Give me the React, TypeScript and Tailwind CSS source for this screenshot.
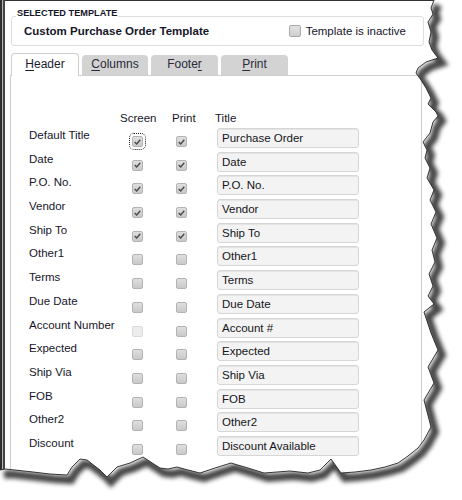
import clsx from "clsx";

type Row = {
  label: string;
  screen: boolean;
  print: boolean;
  title: string;
  focus?: boolean;
  disabled?: boolean;
};

const rows: Row[] = [
  { label: "Default Title", screen: true, print: true, title: "Purchase Order", focus: true },
  { label: "Date", screen: true, print: true, title: "Date" },
  { label: "P.O. No.", screen: true, print: true, title: "P.O. No." },
  { label: "Vendor", screen: true, print: true, title: "Vendor" },
  { label: "Ship To", screen: true, print: true, title: "Ship To" },
  { label: "Other1", screen: false, print: false, title: "Other1" },
  { label: "Terms", screen: false, print: false, title: "Terms" },
  { label: "Due Date", screen: false, print: false, title: "Due Date" },
  { label: "Account Number", screen: false, print: false, title: "Account #", disabled: true },
  { label: "Expected", screen: false, print: false, title: "Expected" },
  { label: "Ship Via", screen: false, print: false, title: "Ship Via" },
  { label: "FOB", screen: false, print: false, title: "FOB" },
  { label: "Other2", screen: false, print: false, title: "Other2" },
  { label: "Discount", screen: false, print: false, title: "Discount Available" },
];

function Check({ checked, disabled, focus }: { checked?: boolean; disabled?: boolean; focus?: boolean }) {
  return (
    <span
      className={clsx(
        "flex h-[11px] w-[11px] items-center justify-center rounded-[2px] border",
        disabled
          ? "border-[#dadada] bg-[#ececec]"
          : "border-[#b3b3b3] bg-linear-to-b from-[#dfdfdf] to-[#c9c9c9]",
        focus && "outline-1 outline-offset-2 outline-dotted outline-[#222]"
      )}
    >
      {checked ? (
        <svg width="7" height="6" viewBox="0 0 7 6">
          <path d="M0.7 3.1 L2.7 5 L6.3 0.8" fill="none" stroke="#4a4a4a" strokeWidth="1.4" />
        </svg>
      ) : null}
    </span>
  );
}

// torn paper edge, right side then bottom
const edge: [number, number][] = [
  [434, 0], [431, 8], [433, 14], [428, 22], [431, 32], [429, 42], [432, 50], [438, 58],
  [426, 62], [418, 68], [416, 73], [421, 80], [426, 88], [431, 98], [428, 104], [436, 112],
  [438, 116], [433, 122], [430, 133], [423, 142], [427, 150], [425, 158], [430, 168],
  [427, 178], [434, 190], [430, 200], [436, 212], [431, 224], [437, 238], [432, 250],
  [435, 262], [429, 274], [433, 286], [428, 296], [434, 304], [424, 312], [431, 333],
  [438, 350], [428, 367], [434, 383], [424, 400], [431, 427], [424, 440], [418, 448],
  [408, 456], [398, 463], [385, 467], [371, 470], [355, 472], [341, 473], [331, 459],
  [320, 470], [308, 473], [290, 471], [264, 473], [248, 468], [231, 463], [215, 468],
  [200, 473], [188, 470], [177, 467], [168, 469], [160, 468], [143, 457], [130, 463],
  [117, 467], [107, 477], [100, 470], [87, 460], [80, 459], [72, 467], [67, 475],
  [50, 474], [33, 472], [15, 470], [5, 469], [0, 470],
];

function TornEdge() {
  const line = edge.map(([x, y]) => `${x},${y}`).join(" ");
  const outside = `M462,0 L${line.split(" ").join(" L")} L0,500 L462,500 Z`;
  return (
    <svg className="pointer-events-none absolute left-0 top-0" width="462" height="500" viewBox="0 0 462 500">
      <defs>
        <filter id="blur" x="-10%" y="-10%" width="120%" height="120%">
          <feGaussianBlur stdDeviation="2.2" />
        </filter>
        <clipPath id="outside">
          <path d={outside} />
        </clipPath>
      </defs>
      <path d={outside} fill="#fff" />
      <g clipPath="url(#outside)">
        <polyline
          points={line}
          transform="translate(4 5)"
          fill="none"
          stroke="#333"
          strokeWidth="8"
          opacity="0.9"
          filter="url(#blur)"
        />
      </g>
      <polyline points={line} fill="none" stroke="#222" strokeWidth="0.9" />
    </svg>
  );
}

function Tab({ children, active, width }: { children: React.ReactNode; active?: boolean; width: string }) {
  return (
    <div
      className={clsx(
        "flex items-center justify-center rounded-t-[4px] text-[12px] leading-[14px]",
        width,
        active
          ? "relative z-10 -mb-px h-[23px] border border-b-0 border-[#cfcfcf] bg-white pb-[3px] text-[#1b1b30]"
          : "h-[20px] bg-[#d3d3d3] pb-[2px] text-[#2a2a3a]"
      )}
    >
      {children}
    </div>
  );
}

export default function App() {
  return (
    <div className="relative h-[500px] w-[462px] overflow-hidden bg-white font-['Liberation_Sans',Arial,sans-serif] text-[#16162a]">
      <div className="h-full pt-[8px] shadow-[inset_2px_0_#2e2e2e,inset_3px_0_#b5b5b5,inset_5px_0_#444,inset_0_1px_#333]">
        <div className="ml-[11px] w-[413px]">
          <div className="relative z-10 -mb-[3px] ml-[5px] w-fit bg-white px-px text-[9.2px] font-bold leading-[11px]">
            SELECTED TEMPLATE
          </div>
          <div className="flex h-[30px] items-center justify-between rounded-[3px] border border-[#dedede] pl-[12px] pr-[17px]">
            <span className="text-[11.5px] font-bold leading-[14px]">Custom Purchase Order Template</span>
            <label className="flex items-center gap-[5px] text-[11.5px] leading-[14px]">
              <span className="h-[12px] w-[12px] rounded-[2px] border border-[#a9a9a9] bg-linear-to-b from-[#e2e2e2] to-[#cfcfcf]" />
              Template is inactive
            </label>
          </div>
        </div>

        <div className="ml-[11px] mt-[7px] flex h-[22px] items-end gap-[3px]">
          <Tab active width="w-[68px]">
            <span>
              <span className="underline underline-offset-2">H</span>eader
            </span>
          </Tab>
          <Tab width="w-[66px]">
            <span>
              <span className="underline underline-offset-2">C</span>olumns
            </span>
          </Tab>
          <Tab width="w-[67px]">
            <span>
              Foote<span className="underline underline-offset-2">r</span>
            </span>
          </Tab>
          <Tab width="w-[67px]">
            <span>
              <span className="underline underline-offset-2">P</span>rint
            </span>
          </Tab>
        </div>

        <div className="ml-[10px] h-[500px] w-[412px] border-x border-t border-[#cfcfcf] pl-[18px] pt-[35px] text-[11.5px]">
          <div className="flex h-[15px] leading-[14px]">
            <span className="w-[91px]" />
            <span className="w-[52px]">Screen</span>
            <span className="w-[43px]">Print</span>
            <span>Title</span>
          </div>
          {rows.map((r) => (
            <div key={r.label} className="flex h-[23.7px] items-start">
              <span className="mt-[2px] w-[103px] whitespace-nowrap leading-[14px]">{r.label}</span>
              <span className="w-[44px] pt-[10px]">
                <Check checked={r.screen} disabled={r.disabled} focus={r.focus} />
              </span>
              <span className="w-[41px] pt-[10px]">
                <Check checked={r.print} />
              </span>
              <span className="mt-[2px] flex h-[20px] w-[142px] items-center rounded-[3px] border border-[#d6d6d6] bg-[#f3f3f3] px-[4px] leading-[14px] text-[#151520] shadow-[inset_0_1px_#e4e4e4]">
                {r.title}
              </span>
            </div>
          ))}
        </div>
      </div>
      <TornEdge />
    </div>
  );
}
